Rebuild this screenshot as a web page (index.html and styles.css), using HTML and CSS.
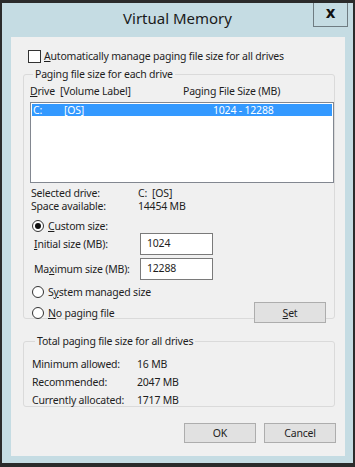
FILE: index.html
```html
<!DOCTYPE html>
<html lang="en">
<head>
    <meta charset="UTF-8">
    <title>Virtual Memory</title>
    <link rel="stylesheet" href="styles.css">
</head>
<body>
    <div class="window">
        <div class="titlebar">
            <span class="title">Virtual Memory</span>
            <button class="close">x</button>
        </div>
        <div class="client">
            <label class="check"><span class="box"></span><span><u>A</u>utomatically manage paging file size for all drives</span></label>

            <fieldset class="group drives">
                <legend>Paging file size for each drive</legend>
                <div class="list-head">
                    <span class="col-drive"><u>D</u>rive&nbsp; [Volume Label]</span>
                    <span class="col-size">Paging File Size (MB)</span>
                </div>
                <div class="list">
                    <div class="row selected">
                        <span class="c-letter">C:</span>
                        <span class="c-label">[OS]</span>
                        <span class="c-size">1024 - 12288</span>
                    </div>
                </div>
                <div class="info">
                    <span>Selected drive:</span><span>C:&nbsp; [OS]</span>
                    <span>Space available:</span><span>14454 MB</span>
                </div>
                <label class="radio custom"><span class="dot checked"></span><span><u>C</u>ustom size:</span></label>
                <div class="field">
                    <span class="field-label"><u>I</u>nitial size (MB):</span>
                    <span class="input">1024</span>
                </div>
                <div class="field">
                    <span class="field-label">Ma<u>x</u>imum size (MB):</span>
                    <span class="input">12288</span>
                </div>
                <label class="radio system"><span class="dot"></span><span>S<u>y</u>stem managed size</span></label>
                <div class="last-row">
                    <label class="radio"><span class="dot"></span><span><u>N</u>o paging file</span></label>
                    <button class="btn set"><u>S</u>et</button>
                </div>
            </fieldset>

            <fieldset class="group totals">
                <legend>Total paging file size for all drives</legend>
                <div class="totals-grid">
                    <span>Minimum allowed:</span><span>16 MB</span>
                    <span>Recommended:</span><span>2047 MB</span>
                    <span>Currently allocated:</span><span>1717 MB</span>
                </div>
            </fieldset>

            <div class="actions">
                <button class="btn">OK</button>
                <button class="btn">Cancel</button>
            </div>
        </div>
    </div>
</body>
</html>
```

FILE: styles.css
```css
body {
    margin: 0;
    background: #2b2b2b;
    font-family: 'Noto Sans', 'Open Sans', sans-serif;
    font-size: 10.5px;
    letter-spacing: -0.2px;
    color: #1e1e1e;
}
u {
    text-decoration: underline;
    text-underline-offset: 1px;
}
.window {
    width: 351px;
    height: 460px;
    margin: 3px 2px 0;
    background: #c5dce3;
    display: flex;
    flex-direction: column;
}
.titlebar {
    height: 34px;
    display: flex;
    align-items: center;
    justify-content: center;
    position: relative;
}
.title {
    font-size: 15px;
    letter-spacing: 0;
    color: #1a1a1a;
    margin-top: -4px;
}
.close {
    position: absolute;
    top: 0;
    right: 5px;
    width: 35px;
    height: 24px;
    background: #c5dce3;
    border: 1px solid #6f7c82;
    border-top: none;
    font-family: 'DejaVu Sans', sans-serif;
    font-weight: bold;
    font-size: 15px;
    line-height: 16px;
    padding: 0 0 4px;
    color: #111;
}
.client {
    margin: 0 8px 0 9px;
    height: 419px;
    background: #f0f0f0;
    display: flex;
    flex-direction: column;
}
.check {
    display: flex;
    align-items: center;
    margin: 13px 0 0 17px;
    height: 12px;
    gap: 3px;
}
.box {
    width: 11px;
    height: 11px;
    border: 1px solid #333;
    background: #fff;
}
.group {
    margin: 0;
    border: 1px solid #dadada;
    border-radius: 3px;
    min-width: 0;
}
.group legend {
    padding: 0 2px;
    margin-left: 3px;
    line-height: 14px;
}
.drives {
    margin: 5px 10px 0 12px;
    padding: 0 0 0 6px;
    height: 252px;
    box-sizing: border-box;
}
.list-head {
    display: flex;
    height: 16px;
    align-items: center;
    margin-top: 2px;
}
.col-drive {
    width: 153px;
}
.list {
    margin-top: 3px;
    height: 81px;
    border: 1px solid #828790;
    background: #fff;
    box-sizing: border-box;
    padding: 1px;
}
.row {
    display: flex;
    height: 12px;
    align-items: center;
}
.row.selected {
    background: #3399ff;
    color: #fff;
}
.c-letter {
    width: 31px;
    padding-left: 1px;
}
.c-label {
    width: 149px;
}
.info {
    display: grid;
    grid-template-columns: 107px auto;
    margin-top: 4px;
    line-height: 13px;
    padding-left: 1px;
}
.radio {
    display: flex;
    align-items: center;
    gap: 4px;
    height: 12px;
}
.custom {
    margin: 7px 0 0 2px;
}
.dot {
    width: 10px;
    height: 10px;
    border: 1px solid #333;
    border-radius: 50%;
    background: #fff;
    position: relative;
}
.dot.checked::after {
    content: '';
    position: absolute;
    left: 2px;
    top: 2px;
    width: 6px;
    height: 6px;
    border-radius: 50%;
    background: #111;
}
.field {
    display: flex;
    align-items: center;
    margin-top: 1px;
}
.field + .field {
    margin-top: 3px;
}
.field-label {
    width: 106px;
    padding-left: 4px;
}
.input {
    width: 73px;
    height: 22px;
    box-sizing: border-box;
    border: 1px solid #7a7a7a;
    background: #fff;
    padding: 0 6px;
    line-height: 19px;
}
.system {
    margin: 6px 0 0 2px;
}
.last-row {
    display: flex;
    align-items: center;
    justify-content: space-between;
    margin: 4px 8px 0 2px;
}
.btn {
    width: 72px;
    height: 21px;
    background: #e1e1e1;
    border: 1px solid #adadad;
    font-family: inherit;
    font-size: 10.5px;
    letter-spacing: -0.2px;
    color: #1e1e1e;
    padding: 0;
}
.totals {
    margin: 15px 10px 0 12px;
    padding: 0 0 0 8px;
    height: 73px;
    box-sizing: border-box;
}
.totals-grid {
    display: grid;
    grid-template-columns: 105px auto;
    line-height: 18px;
    margin-top: 7px;
}
.actions {
    display: flex;
    justify-content: flex-end;
    gap: 8px;
    margin: 16px 9px 0 0;
}
.actions .btn {
    height: 20px;
}
```
